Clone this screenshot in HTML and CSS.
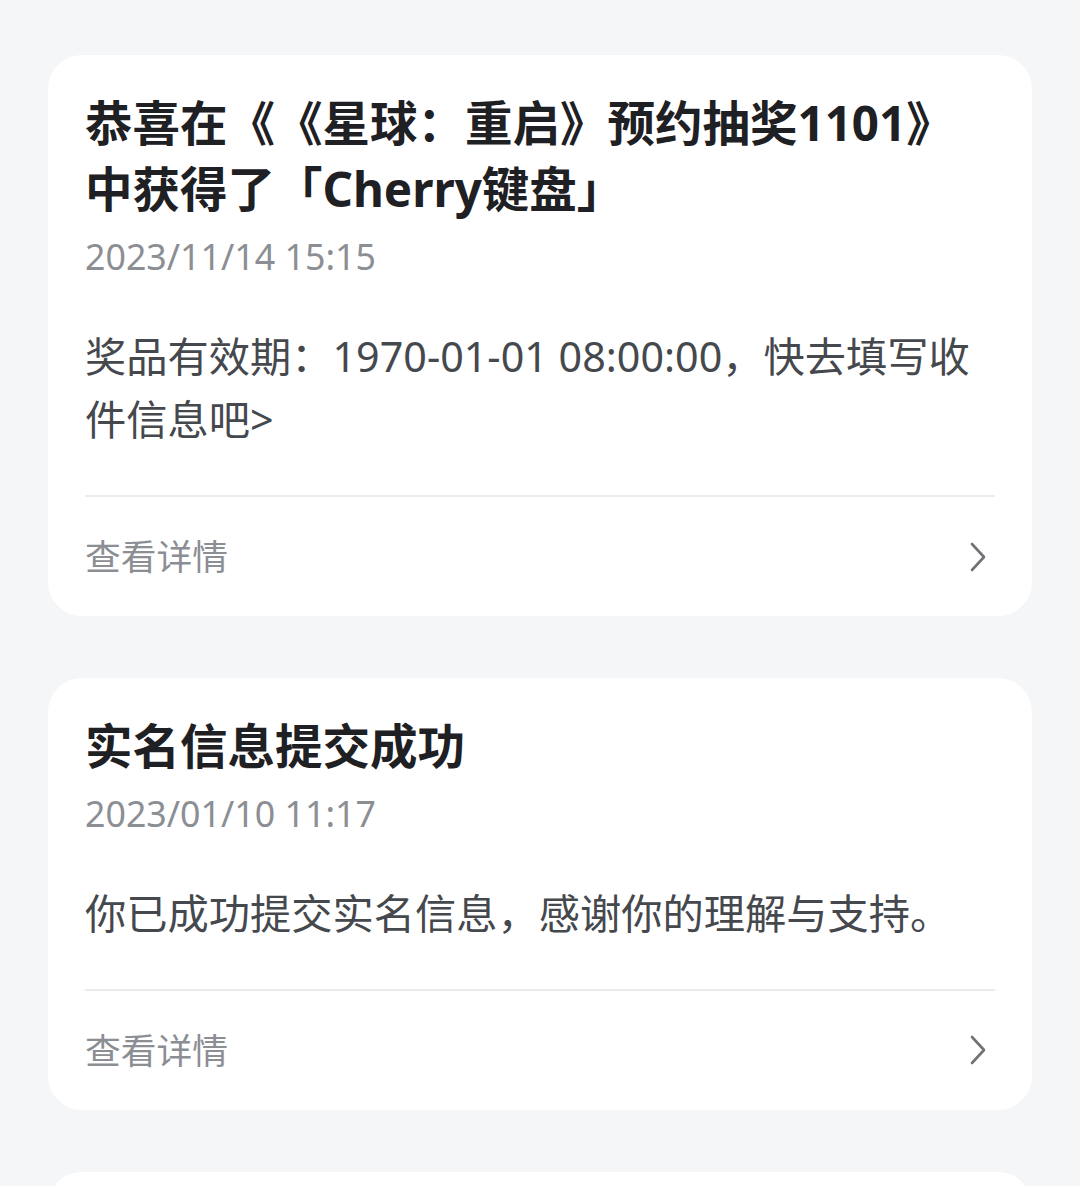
FILE: index.html
```html
<!DOCTYPE html>
<html lang="zh-CN">
<head>
<meta charset="utf-8">
<title>消息</title>
<link rel="stylesheet" href="styles.css">
</head>
<body>
<main class="list">
  <section class="card">
    <h2 class="card-title">恭喜在《《星球：重启》预约抽奖1101》中获得了「Cherry键盘」</h2>
    <div class="card-date">2023/11/14 15:15</div>
    <p class="card-body">奖品有效期：1970-01-01 08:00:00，快去填写收件信息吧&gt;</p>
    <a class="card-footer" href="#">
      <span class="footer-label">查看详情</span>
      <svg class="chevron" viewBox="0 0 18 30" width="18" height="30"><path d="M3 2 L15 15 L3 28" fill="none" stroke="currentColor" stroke-width="2.6" stroke-linecap="round" stroke-linejoin="round"/></svg>
    </a>
  </section>
  <section class="card">
    <h2 class="card-title">实名信息提交成功</h2>
    <div class="card-date">2023/01/10 11:17</div>
    <p class="card-body">你已成功提交实名信息，感谢你的理解与支持。</p>
    <a class="card-footer" href="#">
      <span class="footer-label">查看详情</span>
      <svg class="chevron" viewBox="0 0 18 30" width="18" height="30"><path d="M3 2 L15 15 L3 28" fill="none" stroke="currentColor" stroke-width="2.6" stroke-linecap="round" stroke-linejoin="round"/></svg>
    </a>
  </section>
  <section class="card card-peek"></section>
</main>
</body>
</html>
```

FILE: styles.css
```css
html, body {
  margin: 0;
  padding: 0;
  background: #f5f6f8;
}
body {
  font-family: "Noto Sans", "Noto Sans CJK SC", sans-serif;
  text-spacing-trim: space-all;
  height: 1186px;
  overflow: hidden;
}
.list {
  padding: 55px 48px 0;
  display: flex;
  flex-direction: column;
  gap: 62px;
}
.card {
  background: #ffffff;
  border-radius: 34px;
  padding: 35px 37px 0;
}
.card-peek {
  height: 200px;
}
.card-title {
  margin: 0;
  padding-right: 30px;
  font-size: 47.5px;
  line-height: 66px;
  font-weight: 700;
  color: #1e2024;
}
.card-date {
  margin-top: 10px;
  font-size: 35.75px;
  line-height: 49.5px;
  color: #8b8e93;
}
.card-body {
  margin: 43px 0 0;
  font-size: 41.25px;
  line-height: 63.25px;
  color: #45484d;
}
.card-footer {
  margin-top: 44px;
  border-top: 2px solid #ebebed;
  height: 119px;
  display: flex;
  align-items: center;
  justify-content: space-between;
  text-decoration: none;
  color: #8b8e93;
}
.footer-label {
  font-size: 35.75px;
  line-height: 49.5px;
}
.chevron {
  color: #6f7276;
  margin-right: 8px;
}
```
